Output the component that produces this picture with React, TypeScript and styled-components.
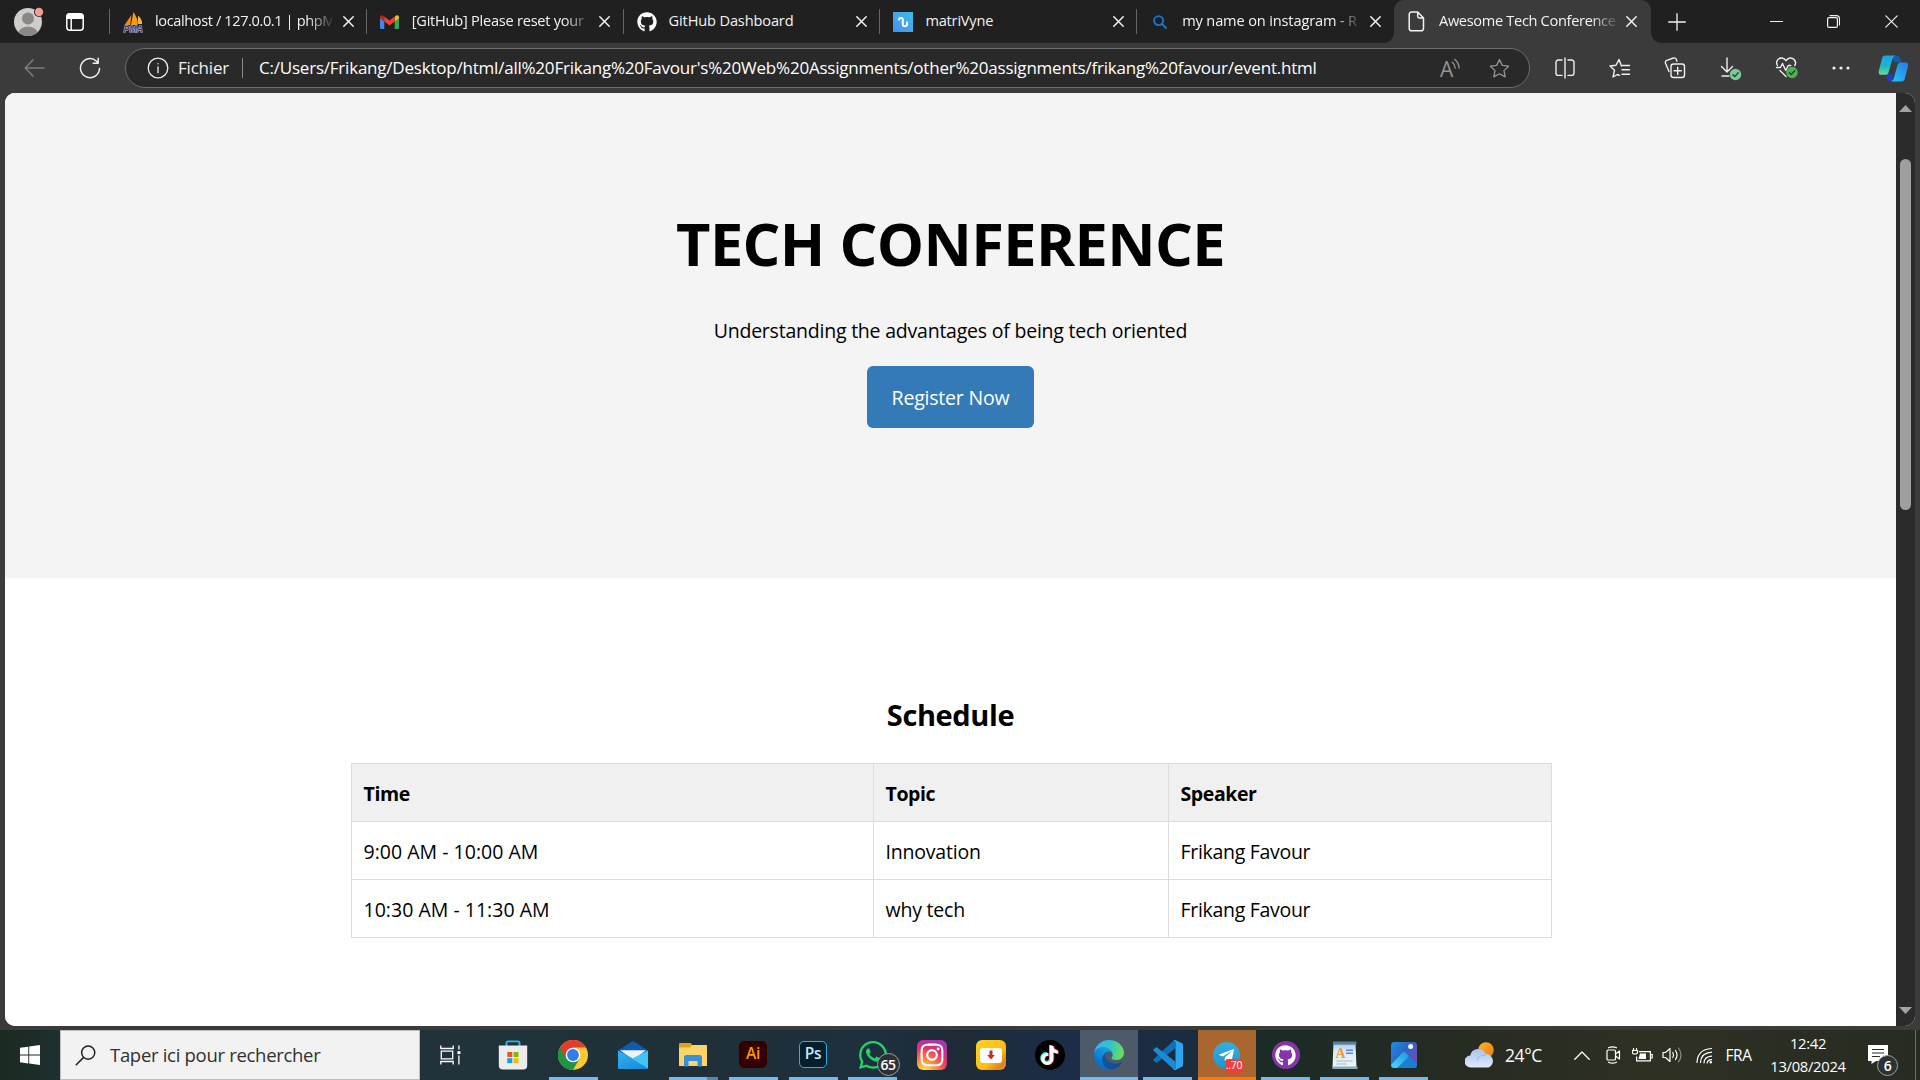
import React from "react";
import styled, { createGlobalStyle, css } from "styled-components";
import { FaGithub, FaTiktok, FaWhatsapp, FaInstagram, FaTelegramPlane } from "react-icons/fa";

const Global = createGlobalStyle`
  * { box-sizing: border-box; }
  html, body { margin: 0; padding: 0; background: #3b3b3b; }
  body { font-family: "Open Sans", "Noto Sans", "Liberation Sans", sans-serif; overflow: hidden; }
  svg { display: block; flex: none; }
`;

const Screen = styled.div`
  width: 1920px;
  height: 1080px;
  display: flex;
  flex-direction: column;
  background: #3b3b3b;
  overflow: hidden;
`;

/* ---------- tab strip ---------- */

const TabStrip = styled.header`
  height: 43px;
  flex: none;
  display: flex;
  background: #202020;
  color: #f2f2f2;
`;

const StripLead = styled.div`
  width: 110px;
  display: flex;
  align-items: center;
  padding-left: 13px;
  gap: 22px;
`;

const Tab = styled.div<{ $active?: boolean }>`
  width: 256.8px;
  height: 43px;
  display: flex;
  align-items: center;
  position: relative;
  padding-left: 13px;
  &::before {
    content: "";
    position: absolute;
    left: -1px;
    top: 9px;
    width: 1px;
    height: 25px;
    background: #666;
  }
  ${(p) =>
    p.$active &&
    css`
      background: #3b3b3b;
      border-radius: 10px 10px 0 0;
      &::before {
        left: -10px;
        top: 33px;
        width: 10px;
        height: 10px;
        background: radial-gradient(circle at 0 0, #202020 9.5px, #3b3b3b 10px);
      }
      &::after {
        content: "";
        position: absolute;
        right: -10px;
        top: 33px;
        width: 10px;
        height: 10px;
        background: radial-gradient(circle at 100% 0, #202020 9.5px, #3b3b3b 10px);
      }
    `}
`;

const TabIcon = styled.div`
  width: 20px;
  height: 22px;
  display: flex;
  align-items: center;
  justify-content: center;
`;

const TabTitle = styled.div<{ $ls: number; $fade?: boolean }>`
  width: 177px;
  margin-left: 12px;
  font-size: 14.6px;
  line-height: 20px;
  padding-bottom: 3px;
  letter-spacing: ${(p) => p.$ls}px;
  white-space: nowrap;
  ${(p) => p.$fade && css`mask-image: linear-gradient(90deg, #000 152px, transparent 181px);`}
`;

const TabClose = styled.div`
  width: 32px;
  display: flex;
  justify-content: center;
`;

const NewTab = styled.div`
  width: 53px;
  display: flex;
  align-items: center;
  justify-content: center;
`;

const WindowButtons = styled.div`
  margin-left: auto;
  display: flex;
`;

const WindowButton = styled.div`
  width: 57.5px;
  display: flex;
  align-items: center;
  justify-content: center;
`;

/* ---------- toolbar ---------- */

const Toolbar = styled.nav`
  height: 50px;
  flex: none;
  display: flex;
  align-items: center;
  color: #f0f0f0;
  background: #3b3b3b;
`;

const NavButtons = styled.div`
  width: 125px;
  display: flex;
  align-items: center;
  padding-left: 24px;
  gap: 34px;
`;

const AddressBar = styled.div`
  width: 1405px;
  height: 40px;
  border: 1px solid #6c6c6c;
  border-radius: 20px;
  background: #292929;
  display: flex;
  align-items: center;
  padding-left: 21px;
  font-size: 17px;
  line-height: 24px;
`;

const Scheme = styled.span`
  width: 50px;
  margin-left: 9px;
  letter-spacing: -0.2px;
  white-space: nowrap;
`;

const AddressDivider = styled.span`
  width: 1px;
  height: 20px;
  margin: 0 16px 0 14px;
  background: #8a8a8a;
`;

const Url = styled.span`
  flex: 1;
  letter-spacing: -0.215px;
  color: #fff;
  white-space: nowrap;
`;

const AddressActions = styled.div`
  display: flex;
  gap: 28px;
  padding-right: 19px;
  color: #959595;
`;

const ToolbarActions = styled.div`
  flex: 1;
  display: grid;
  grid-template-columns: 55px 55px 55px 57px 55px 54px 50px;
  padding-left: 7px;
  justify-items: center;
  align-items: center;
`;

/* ---------- page ---------- */

const Viewport = styled.div`
  height: 933px;
  flex: none;
  margin: 0 5px;
  display: flex;
  border-radius: 10px;
  overflow: hidden;
  background: #fff;
`;

const Page = styled.main`
  width: 1891px;
  display: flex;
  flex-direction: column;
  align-items: center;
  background: #fff;
  color: #000;
`;

const Hero = styled.section`
  width: 100%;
  height: 485px;
  padding-top: 110px;
  display: flex;
  flex-direction: column;
  align-items: center;
  background: #f4f4f4;
`;

const HeroTitle = styled.h1`
  margin: 0;
  font-size: 59.5px;
  line-height: 80px;
  font-weight: 700;
  letter-spacing: -0.65px;
  white-space: nowrap;
`;

const HeroText = styled.p`
  margin: 33px 0 20px;
  font-size: 19.5px;
  line-height: 30px;
  letter-spacing: -0.22px;
`;

const RegisterButton = styled.button`
  width: 167px;
  height: 62px;
  padding: 2px 0 0;
  border: 0;
  border-radius: 6px;
  background: #337ab7;
  color: #fff;
  font: 400 19.5px/30px "Open Sans", "Noto Sans", sans-serif;
  letter-spacing: -0.2px;
`;

const ScheduleTitle = styled.h2`
  margin: 117px 0 28px;
  font-size: 29px;
  line-height: 40px;
  font-weight: 700;
  letter-spacing: -0.4px;
`;

const ScheduleTable = styled.table`
  width: 1200px;
  margin-left: 1px;
  table-layout: fixed;
  border-collapse: collapse;
  font-size: 19.5px;
  line-height: 30px;
`;

const Row = styled.tr`
  height: 58px;
`;

const cell = css`
  border: 1px solid #dcdcdc;
  padding: 3px 12px 0;
  text-align: left;
  white-space: nowrap;
`;

const Head = styled.th<{ $w: number }>`
  ${cell}
  width: ${(p) => p.$w}px;
  background: #f0f0f0;
  font-weight: 700;
  letter-spacing: -0.4px;
`;

const Cell = styled.td<{ $ls: number }>`
  ${cell}
  letter-spacing: ${(p) => p.$ls}px;
`;

const Scrollbar = styled.div`
  width: 19px;
  background: #2b2b2b;
  display: flex;
  flex-direction: column;
  align-items: center;
  padding: 12px 0;
`;

const ScrollThumb = styled.div`
  width: 11px;
  height: 351px;
  margin: 47px 0 auto;
  border-radius: 6px;
  background: #9f9f9f;
`;

/* ---------- taskbar ---------- */

const Taskbar = styled.footer`
  height: 50px;
  margin-top: auto;
  flex: none;
  display: flex;
  color: #fff;
  background: linear-gradient(90deg, #1c2a20 0, #1d2f30 60px, #20323a 430px, #1f3039 700px, #1e2f3e 880px, #1e2a36 960px, #1c2d48 1060px, #1b2c3f 1190px, #1d2b25 1270px, #1f2b25 1340px, #262b22 1450px, #2e3022 1650px, #2a2e22 1800px, #262c22 1920px);
`;

const StartButton = styled.div`
  width: 60px;
  display: flex;
  align-items: center;
  justify-content: center;
`;

const SearchBox = styled.div`
  width: 360px;
  display: flex;
  align-items: center;
  padding-left: 14px;
  gap: 14px;
  background: #f2f2f2;
  border: 1px solid #bdbdbd;
  color: #303030;
  font-size: 18.5px;
  letter-spacing: -0.3px;
  white-space: nowrap;
`;

const SearchHint = styled.span`
  padding-bottom: 2px;
`;

type Underline = "none" | "full" | "multi" | "wide" | "alert";

const lines: Record<Underline, string> = {
  none: "none",
  full: "linear-gradient(#76b9ed, #76b9ed) center bottom / 49px 3px no-repeat",
  multi:
    "linear-gradient(90deg, #76b9ed 38px, #5785ab 38px) center bottom / 49px 3px no-repeat",
  wide: "linear-gradient(#76b9ed, #76b9ed) bottom / 100% 3px no-repeat, #4c5a69",
  alert: "linear-gradient(#ff7a00, #ff7a00) bottom / 100% 3px no-repeat, #a9672f",
};

const Slot = styled.div<{ $w: number; $line: Underline; $pull?: number }>`
  width: ${(p) => p.$w}px;
  margin: 0 ${(p) => (p.$line === "wide" || p.$line === "alert" ? 0.5 : 0)}px;
  display: flex;
  align-items: center;
  justify-content: center;
  padding-right: ${(p) => p.$pull ?? 0}px;
  background: ${(p) => lines[p.$line]};
`;

const IconWithBadge = styled.div`
  position: relative;
`;

const CountBadge = styled.span<{ $x: number; $y: number; $d: number }>`
  position: absolute;
  left: ${(p) => p.$x}px;
  top: ${(p) => p.$y}px;
  width: ${(p) => p.$d}px;
  height: ${(p) => p.$d}px;
  border-radius: 50%;
  border: 1px solid #a0a0a0;
  background: #2b3134;
  color: #fff;
  font-size: 14px;
  font-weight: 600;
  letter-spacing: -0.4px;
  display: flex;
  align-items: center;
  justify-content: center;
`;

const RedBadge = styled.span`
  position: absolute;
  left: 12px;
  top: 17px;
  width: 18px;
  height: 14px;
  border-radius: 4px;
  background: #f03e3e;
  color: #fff;
  font-size: 10.5px;
  line-height: 13px;
  letter-spacing: -0.3px;
  text-align: center;
`;

const RoundIcon = styled.div<{ $bg: string; $r?: string; $w?: number; $h?: number }>`
  width: ${(p) => p.$w ?? 30}px;
  height: ${(p) => p.$h ?? 30}px;
  border-radius: ${(p) => p.$r ?? "50%"};
  background: ${(p) => p.$bg};
  color: #fff;
  display: flex;
  align-items: center;
  justify-content: center;
`;

const AdobeIcon = styled.div<{ $bg: string; $fg: string; $edge: string }>`
  width: 28px;
  height: 27px;
  margin-bottom: 2px;
  border-radius: 5px;
  border: 1.5px solid ${(p) => p.$edge};
  background: ${(p) => p.$bg};
  color: ${(p) => p.$fg};
  font-size: 15.5px;
  line-height: 22px;
  font-weight: 600;
  letter-spacing: -0.4px;
  text-align: center;
`;

const TikTokMark = styled.span<{ $c: string; $x: number; $y: number }>`
  position: absolute;
  left: ${(p) => p.$x}px;
  top: ${(p) => p.$y}px;
  color: ${(p) => p.$c};
`;

const TikTokStack = styled.div`
  position: relative;
  width: 19px;
  height: 19px;
`;

const Weather = styled.div`
  width: 135px;
  padding-left: 32px;
  display: flex;
  align-items: center;
  gap: 10px;
  font-size: 17.5px;
  letter-spacing: -0.4px;
`;

const Tray = styled.div`
  width: 193px;
  flex: none;
  display: flex;
  align-items: center;
  padding-left: 2px;
`;

const TrayItem = styled.div<{ $w: number }>`
  width: ${(p) => p.$w}px;
  flex: none;
  display: flex;
  justify-content: center;
  font-size: 15.4px;
  letter-spacing: -0.4px;
`;

const Clock = styled.div`
  width: 94px;
  display: flex;
  flex-direction: column;
  align-items: center;
  padding-top: 2px;
  font-size: 14.8px;
  line-height: 23px;
  letter-spacing: -0.3px;
`;

const Notifications = styled.div`
  flex: 1;
  position: relative;
  display: flex;
  padding: 15px 0 0 13px;
`;

const DesktopEdge = styled.div`
  width: 5px;
  border-left: 1px solid #6e7168;
`;

/* ---------- icons ---------- */

const Stroke = ({ w, h = w, sw = 1.4, children }: { w: number; h?: number; sw?: number; children: React.ReactNode }) => (
  <svg width={w} height={h} viewBox={`0 0 ${w} ${h}`} fill="none" stroke="currentColor" strokeWidth={sw} strokeLinecap="round" strokeLinejoin="round">
    {children}
  </svg>
);

const Cross = ({ s = 11, sw = 1.5 }: { s?: number; sw?: number }) => (
  <Stroke w={s} sw={sw}>
    <path d={`M.8 .8 L${s - 0.8} ${s - 0.8} M${s - 0.8} .8 L.8 ${s - 0.8}`} />
  </Stroke>
);

const Profile = () => (
  <svg width="31" height="31" viewBox="0 0 31 31">
    <defs>
      <clipPath id="avatar"><circle cx="15" cy="16" r="14" /></clipPath>
    </defs>
    <circle cx="15" cy="16" r="14" fill="#cfcdca" />
    <g clipPath="url(#avatar)" fill="#8a8886">
      <circle cx="15" cy="12.5" r="6" />
      <ellipse cx="15" cy="27" rx="9.5" ry="6.5" />
    </g>
    <circle cx="26" cy="6" r="5" fill="#202020" />
    <circle cx="26" cy="6" r="4.2" fill="#f79a94" />
  </svg>
);

const Workspaces = () => (
  <svg width="18" height="18" viewBox="0 0 18 18" fill="none" stroke="#fff" strokeWidth="1.5">
    <rect x=".8" y=".8" width="16.4" height="16.4" rx="3" />
    <path d="M1 3.5a2.5 2.5 0 0 1 2.5-2.5h11a2.5 2.5 0 0 1 2.5 2.5V5.3H1z" fill="#fff" />
    <path d="M5.2 5v12" />
  </svg>
);

const PhpMyAdmin = () => (
  <svg width="21" height="22" viewBox="0 0 21 22">
    <path d="M8 14 10.4 1q5 7 4.2 13z" fill="#f89c0e" />
    <path d="M15 13 15 4.5q4.5 4 4 8.5z" fill="#f7b24a" />
    <path d="M1.5 14 8.5 4 7.3 14z" fill="#ed8b1c" />
    <text x="10.3" y="20.8" textAnchor="middle" fontFamily="Liberation Sans, sans-serif" fontSize="8.6" fontWeight="700" fontStyle="italic" fill="#3a3f86" stroke="#c9cbe6" strokeWidth=".9" paintOrder="stroke" textLength="19">PMA</text>
  </svg>
);

const Gmail = () => (
  <svg width="19" height="14" viewBox="0 0 19 14">
    <path d="M0 3v9.7q0 1.3 1.3 1.3H4.3V6z" fill="#4285f4" />
    <path d="M19 3v9.7q0 1.3-1.3 1.3h-3V6z" fill="#34a853" />
    <path d="M0 2v1.2L4.3 6.6V2L3 .6Q.3-.4 0 2z" fill="#c5221f" />
    <path d="M19 2v1.2l-4.3 3.4V2L16 .6Q18.7-.4 19 2z" fill="#fbbc04" />
    <path d="M4.3 1.6 9.5 5.6l5.2-4v5L9.5 10.5 4.3 6.6z" fill="#ea4335" />
  </svg>
);

const MatriVyne = () => (
  <svg width="20" height="20" viewBox="0 0 20 20">
    <defs>
      <linearGradient id="mv" x1="0" y1="1" x2="1" y2="0">
        <stop offset="0" stopColor="#4a8cf0" />
        <stop offset="1" stopColor="#3cc0e6" />
      </linearGradient>
    </defs>
    <rect width="20" height="20" fill="url(#mv)" />
    <path d="M6 7.500C6.200 5.400 9.800 5.400 9.800 8v4.500c0 2.300 4 2.300 4.200 0V10.500" fill="none" stroke="#fff" strokeWidth="2" strokeLinecap="round" />
  </svg>
);

const SearchBlue = () => (
  <svg width="14" height="14" viewBox="0 0 14 14" fill="none" stroke="#1576d1" strokeWidth="1.9" strokeLinecap="round">
    <circle cx="5.6" cy="5.6" r="4.5" />
    <path d="M9 9l4 4" />
  </svg>
);

const FileIcon = () => (
  <Stroke w={17} h={21} sw={1.5}>
    <path d="M3.5 1h6.2L15.5 7v10.5a2.3 2.3 0 0 1-2.3 2.3h-9.700A2.3 2.3 0 0 1 1.2 17.5V3.3A2.3 2.3 0 0 1 3.5 1zM9.7 1.3v4a1.6 1.6 0 0 0 1.6 1.6h4" />
  </Stroke>
);

const starPath = "M10.5 1.5l2.800 5.900 6.300.8-4.600 4.400 1.200 6.300-5.700-3.100-5.700 3.100L6 12.600 1.400 8.200l6.300-.8z";

const ReadAloud = () => (
  <svg width="21" height="20" viewBox="0 0 21 20" fill="none" stroke="currentColor" strokeWidth="1.4" strokeLinecap="round">
    <text x="0" y="18.500" fontSize="21" fontFamily="Open Sans, sans-serif" fontWeight="400" fill="currentColor" stroke="none">A</text>
    <path d="M12.300 4.200q2.600 2 2.900 5.800M14.800 1.500q4 3 4.300 8.500" />
  </svg>
);

const Ribbon = () => (
  <svg width="31" height="27" viewBox="0 0 32 28">
    <defs>
      <linearGradient id="cpA" x1="0" y1="0" x2="0" y2="1">
        <stop offset="0" stopColor="#1ba4ea" />
        <stop offset=".55" stopColor="#1bb5c9" />
        <stop offset="1" stopColor="#6fdc86" />
      </linearGradient>
      <linearGradient id="cpB" x1="0" y1="1" x2="1" y2="0">
        <stop offset="0" stopColor="#1fc8fb" />
        <stop offset="1" stopColor="#2b78e4" />
      </linearGradient>
    </defs>
    <path d="M14 .6h5.300q2.700 0 3.600 3l1.200 4.200h-7z" fill="#0f5fa6" />
    <path d="M8 20h7.500l-1.200 7.400Q10.500 27.600 9.300 24z" fill="#1a3fd0" />
    <path d="M7.400.6h10.200q-1.800.7-2.600 3.300l-4 13.600q-.9 3-4 3H3.600Q-.2 20.500.8 16.300L4 4Q4.800.6 7.400.6z" fill="url(#cpA)" />
    <path d="M24.400 27.400H13.600q2-.7 2.800-3.300l3.600-13.300q.9-3 4-3h4.200q3.800 0 2.800 4.200L27.800 24q-.8 3.400-3.400 3.400z" fill="url(#cpB)" />
  </svg>
);

const CheckDot = ({ x, y, c }: { x: number; y: number; c: string }) => (
  <g>
    <circle cx={x} cy={y} r="5.700" fill={c} stroke="none" />
    <path d={`M${x - 2.6} ${y + 0.2}l1.800 1.900 3.500-3.900`} stroke="#20402a" strokeWidth="1.3" fill="none" />
  </g>
);

const WindowsLogo = () => (
  <svg width="20" height="20" viewBox="0 0 20 20" fill="#fff">
    <path d="M0 2.800 8.300 1.700V9.600H0zM9.200 1.500 20 0v9.600H9.200zM0 10.500h8.300v7.900L0 17.300zM9.200 10.500H20V20L9.200 18.500z" />
  </svg>
);

const TaskView = () => (
  <svg width="21" height="20" viewBox="0 0 21 20" fill="none" stroke="#fff" strokeWidth="1.3">
    <path d="M.8 .5v3h12.400v-3M.8 19.500v-3h12.400v3M1.300 6.200h11.400v7.600H1.300zM18.900 .5v4M18.900 10.500v9" />
    <path d="M17.400 6.200h3v2.900h-3z" fill="#fff" stroke="none" />
  </svg>
);

const Store = () => (
  <svg width="30" height="30" viewBox="0 0 30 30">
    <path d="M8.500 7V3q0-1.600 1.600-1.600h9.800q1.600 0 1.600 1.600v4" fill="none" stroke="#28b5ee" strokeWidth="1.900" />
    <path d="M.8 5.500h28.400v20q0 4-4 4H4.800q-4 0-4-4z" fill="#ececec" />
    <path d="M9.300 12h5v5h-5z" fill="#f1511b" />
    <path d="M15.500 12h5v5h-5z" fill="#80bb03" />
    <path d="M9.300 18.200h5v5h-5z" fill="#00a4ef" />
    <path d="M15.500 18.200h5v5h-5z" fill="#fbb901" />
  </svg>
);

const Chrome = () => (
  <svg width="30" height="30" viewBox="0 0 30 30">
    <circle cx="15" cy="15" r="15" fill="#fcc934" />
    <path d="M15 15 2 7.500A15 15 0 0 0 15 30L21.500 18.800z" fill="#229342" />
    <path d="M2 7.500A15 15 0 0 1 28 7.500H15L8.600 18.500z" fill="#e33b2e" />
    <circle cx="15" cy="15" r="7.300" fill="#fff" />
    <circle cx="15" cy="15" r="5.900" fill="#2f7de9" />
  </svg>
);

const Mail = () => (
  <svg width="30" height="28" viewBox="0 0 30 28">
    <defs>
      <linearGradient id="mailBody" x1="0" y1="0" x2="1" y2="1">
        <stop offset="0" stopColor="#30b2f0" />
        <stop offset="1" stopColor="#1a86d8" />
      </linearGradient>
    </defs>
    <path d="M0 9.500 14 .4q1-.6 2 0L30 9.500V14H0z" fill="#0c5cb0" />
    <path d="M2 9.200h26L15.500 19z" fill="#eef1f5" />
    <path d="M0 9.500 15.500 18 30 27q0 1-1 1H1q-1 0-1-1z" fill="url(#mailBody)" />
    <path d="M30 9.500V27.500L13.800 17.800z" fill="#40c6f6" />
  </svg>
);

const Explorer = () => (
  <svg width="28" height="24" viewBox="0 0 28 24">
    <path d="M0 1.200Q0 0 1.200 0H11q1 0 1.500 1l1.200 2H28v6H0z" fill="#e0a318" />
    <path d="M0 4.500h11l2-2.500h14q1 0 1 1v20H0z" fill="#fbd567" />
    <path d="M5 23.500v-9q0-2.500 2.500-2.500h13q2.500 0 2.500 2.500v9h-4.500v-5.500H9.500v5.500z" fill="#3a8fd9" />
  </svg>
);

const Downloader = () => (
  <svg width="22" height="15" viewBox="0 0 22 15">
    <rect width="22" height="15" rx="3" fill="#fff" />
    <path d="M9.500 2.500h3v4.500h2.300L11 11.500 7.200 7h2.300z" fill="#d3262a" />
  </svg>
);

const EdgeLogo = () => (
  <svg width="30" height="30" viewBox="0 0 256 256">
    <defs>
      <linearGradient id="edDark" x1="63" y1="178" x2="242" y2="178" gradientUnits="userSpaceOnUse">
        <stop offset="0" stopColor="#0c59a4" />
        <stop offset="1" stopColor="#114a8b" />
      </linearGradient>
      <linearGradient id="edBlue" x1="157" y1="100" x2="46" y2="222" gradientUnits="userSpaceOnUse">
        <stop offset="0" stopColor="#1b9de2" />
        <stop offset=".3" stopColor="#1595df" />
        <stop offset="1" stopColor="#0a6cc8" />
      </linearGradient>
      <linearGradient id="edTop" x1="20" y1="60" x2="250" y2="110" gradientUnits="userSpaceOnUse">
        <stop offset="0" stopColor="#35b5f0" />
        <stop offset=".5" stopColor="#32c4c8" />
        <stop offset="1" stopColor="#6ae052" />
      </linearGradient>
    </defs>
    <path d="M231 190.500c-3.400 1.800-6.900 3.400-10.500 4.700a101.500 101.500 0 0 1-35.900 6.500c-47.300 0-88.500-32.500-88.500-74.300a31.500 31.500 0 0 1 16.400-27.300c-42.800 1.800-53.800 46.400-53.800 72.500 0 74 68.100 81.400 82.800 81.400 7.900 0 19.800-2.300 27-4.600l1.300-.4a128.300 128.300 0 0 0 66.600-52.800 4 4 0 0 0-5.400-5.700z" fill="url(#edDark)" />
    <path d="M105.700 241.400a79.200 79.200 0 0 1-22.700-21.300 80.700 80.700 0 0 1 29.500-120c3.200-1.500 8.500-4.100 15.600-4a32.400 32.400 0 0 1 25.700 13 31.900 31.900 0 0 1 6.300 18.700c0-.2 24.500-79.600-80-79.600-43.900 0-80 41.700-80 78.200a130.200 130.200 0 0 0 12.100 56 128 128 0 0 0 156.300 67.100 75.500 75.500 0 0 1-62.800-8z" fill="url(#edBlue)" />
    <path d="M152.300 148.900c-.9 1-3.400 2.500-3.400 5.600 0 2.600 1.700 5.200 4.800 7.300 14.300 10 41.400 8.600 41.500 8.600a59.600 59.600 0 0 0 30.300-8.300 61.400 61.400 0 0 0 30.400-52.900c.3-22.400-8-37.300-11.300-43.900C223.500 23.900 177.700 0 128 0A128 128 0 0 0 0 126.200c.5-36.500 36.800-66 80-66 3.500 0 23.500.3 42 10a72.600 72.600 0 0 1 30.900 29.300c6.100 10.600 7.200 24.100 7.200 29.500s-2.700 13.300-7.800 19.900z" fill="url(#edTop)" />
  </svg>
);

const VsCode = () => (
  <svg width="30" height="30" viewBox="0 0 30 30">
    <path d="M22.500 0v8.300L4.200 22.600q-.7.500-1.400 0L.6 20.700q-.8-.7 0-1.500L20.500.7z" fill="#0f6fb8" />
    <path d="M22.500 30v-8.300L4.200 7.400q-.7-.5-1.400 0L.6 9.300q-.8.700 0 1.500l19.900 18.500z" fill="#1b8ad4" />
    <path d="M22.300 0l6.700 3.200Q30 3.800 30 5v20q0 1.200-1 1.800L22.300 30q-1.200.2-1.800-.7l2-.8v-27l-2-.8q.6-.9 1.800-.7z" fill="#2ba5ef" />
  </svg>
);

const WordPad = () => (
  <svg width="26" height="28" viewBox="0 0 26 28">
    <defs>
      <linearGradient id="wpPage" x1="0" y1="0" x2="0" y2="1">
        <stop offset="0" stopColor="#9fc8e4" />
        <stop offset=".35" stopColor="#d8ebf6" />
        <stop offset="1" stopColor="#eef5f9" />
      </linearGradient>
    </defs>
    <path d="M1.500 1h22l1 26H.5z" fill="url(#wpPage)" />
    <path d="M1 .5h23.400v3.200H1z" fill="#5a7f9e" />
    <path d="M.5 25.500h25V28H.5z" fill="#8fa9ba" />
    <text x="3.500" y="17" fontFamily="Liberation Serif, serif" fontSize="14" fontWeight="700" fill="#ee9a44">A</text>
    <path d="M14 9.300h7M14 12.300h7" stroke="#5f86c8" strokeWidth="1.600" />
    <path d="M4.500 20h16M4.500 23h10" stroke="#a9b9c4" strokeWidth="1" />
  </svg>
);

const Photos = () => (
  <svg width="26" height="26" viewBox="0 0 26 26">
    <defs>
      <linearGradient id="phBg" x1="0" y1="0" x2="1" y2=".7">
        <stop offset="0" stopColor="#1690e8" />
        <stop offset=".5" stopColor="#2f66c8" />
        <stop offset="1" stopColor="#6a4fae" />
      </linearGradient>
      <linearGradient id="phHill" x1="0" y1="1" x2=".8" y2="0">
        <stop offset="0" stopColor="#4fdcf8" />
        <stop offset="1" stopColor="#1f9fe4" />
      </linearGradient>
      <clipPath id="phClip"><rect width="26" height="26" rx="3.500" /></clipPath>
    </defs>
    <g clipPath="url(#phClip)">
      <rect width="26" height="26" fill="url(#phBg)" />
      <path d="M11 11q2-2 4 0l13 13v4H8z" fill="#1c7fd2" />
      <path d="M-1 24 11 11q2-2 4 0l3 3.200L5 27H-1z" fill="url(#phHill)" />
    </g>
    <circle cx="19.600" cy="4.600" r="2.500" fill="#f1f1fa" />
  </svg>
);

const WeatherIcon = () => (
  <svg width="30" height="26" viewBox="0 0 30 26">
    <defs>
      <linearGradient id="sun" x1="0" y1="0" x2="1" y2="1">
        <stop offset="0" stopColor="#fbb62c" />
        <stop offset="1" stopColor="#ee7a12" />
      </linearGradient>
      <linearGradient id="cloud" x1="0" y1="0" x2="0" y2="1">
        <stop offset="0" stopColor="#a9c3f2" />
        <stop offset="1" stopColor="#dfe8fa" />
      </linearGradient>
    </defs>
    <circle cx="21" cy="8" r="7.800" fill="url(#sun)" />
    <path d="M6 25.500a6 6 0 0 1-.8-12A8 8 0 0 1 20.500 12a7 7 0 0 1 3 13.500z" fill="url(#cloud)" />
    <path d="M12 18.500a7 7 0 0 1 9-5" fill="none" stroke="#9ab4e8" strokeWidth="1" />
  </svg>
);

const tabs = [
  { title: "localhost / 127.0.0.1 | phpM", icon: <PhpMyAdmin />, ls: -0.4, fade: true },
  { title: "[GitHub] Please reset your", icon: <Gmail />, ls: -0.25, fade: true },
  { title: "GitHub Dashboard", icon: <FaGithub size={20} color="#fff" />, ls: -0.15 },
  { title: "matriVyne", icon: <MatriVyne />, ls: -0.2 },
  { title: "my name on instagram - R", icon: <SearchBlue />, ls: -0.15, fade: true },
  { title: "Awesome Tech Conference", icon: <FileIcon />, ls: -0.33, fade: true, active: true },
];

const sessions = [
  ["9:00 AM - 10:00 AM", "Innovation", "Frikang Favour"],
  ["10:30 AM - 11:30 AM", "why tech", "Frikang Favour"],
];

const apps: { w: number; line: Underline; pull?: number; icon: React.ReactNode }[] = [
  { w: 62, line: "none", pull: 1, icon: <TaskView /> },
  { w: 61, line: "none", icon: <Store /> },
  { w: 60, line: "full", icon: <Chrome /> },
  { w: 60, line: "none", icon: <Mail /> },
  { w: 60, line: "multi", icon: <Explorer /> },
  { w: 60, line: "full", icon: <AdobeIcon $bg="#330000" $fg="#ff9a00" $edge="#330000">Ai</AdobeIcon> },
  { w: 60, line: "full", icon: <AdobeIcon $bg="#071e2b" $fg="#c5eafa" $edge="#27b3ea">Ps</AdobeIcon> },
  {
    w: 59,
    line: "full",
    icon: (
      <IconWithBadge>
        <FaWhatsapp size={32} color="#25d366" />
        <CountBadge $x={20} $y={14} $d={23}>65</CountBadge>
      </IconWithBadge>
    ),
  },
  {
    w: 59,
    line: "none",
    icon: (
      <RoundIcon $r="6px" $bg="radial-gradient(circle at 25% 105%, #fdd35b 8%, #f9893c 32%, #e3346b 60%, #b432a6 80%, #6a48d6 110%)">
        <FaInstagram size={26} />
      </RoundIcon>
    ),
  },
  { w: 59, line: "none", icon: <RoundIcon $r="6px" $bg="linear-gradient(135deg, #ffd321 0, #fdbd14 60%, #d98322 85%, #f0a31c 100%)"><Downloader /></RoundIcon> },
  {
    w: 59,
    line: "none",
    icon: (
      <RoundIcon $bg="#000">
        <TikTokStack>
          <TikTokMark $c="#25f4ee" $x={-0.7} $y={-0.5}><FaTiktok size={19} /></TikTokMark>
          <TikTokMark $c="#fe2c55" $x={0.9} $y={0.7}><FaTiktok size={19} /></TikTokMark>
          <TikTokMark $c="#fff" $x={0} $y={0}><FaTiktok size={19} /></TikTokMark>
        </TikTokStack>
      </RoundIcon>
    ),
  },
  { w: 58, line: "wide", icon: <EdgeLogo /> },
  { w: 59, line: "full", icon: <VsCode /> },
  {
    w: 58,
    line: "alert",
    icon: (
      <IconWithBadge>
        <RoundIcon $bg="linear-gradient(#37aee2, #1e96c8)" $w={27} $h={27}>
          <FaTelegramPlane size={17} />
        </RoundIcon>
        <RedBadge>..70</RedBadge>
      </IconWithBadge>
    ),
  },
  { w: 59, line: "full", icon: <RoundIcon $bg="#8534ad" $w={28} $h={28}><FaGithub size={21} /></RoundIcon> },
  { w: 59, line: "full", icon: <WordPad /> },
  { w: 59, line: "full", icon: <Photos /> },
];

export default function App() {
  return (
    <>
      <Global />
      <Screen>
        <TabStrip>
          <StripLead>
            <Profile />
            <Workspaces />
          </StripLead>
          {tabs.map((t) => (
            <Tab key={t.title} $active={t.active}>
              <TabIcon>{t.icon}</TabIcon>
              <TabTitle $ls={t.ls} $fade={t.fade}>{t.title}</TabTitle>
              <TabClose><Cross /></TabClose>
            </Tab>
          ))}
          <NewTab>
            <Stroke w={18} sw={1.3}><path d="M9 .7v16.600M.7 9h16.600" /></Stroke>
          </NewTab>
          <WindowButtons>
            <WindowButton><Stroke w={13} h={3} sw={1.2}><path d="M.5 1.500h12" /></Stroke></WindowButton>
            <WindowButton>
              <Stroke w={13} sw={1.2}>
                <rect x=".6" y="2.600" width="9.800" height="9.800" rx="1.500" />
                <path d="M3 .6h6.500a3 3 0 0 1 3 3V10" />
              </Stroke>
            </WindowButton>
            <WindowButton><Cross s={13} sw={1.2} /></WindowButton>
          </WindowButtons>
        </TabStrip>

        <Toolbar>
          <NavButtons>
            <svg width="21" height="18" viewBox="0 0 21 18" fill="none" stroke="#7d7d7d" strokeWidth="1.500" strokeLinecap="round" strokeLinejoin="round">
              <path d="M20 9H1.200M9 1 1.200 9 9 17" />
            </svg>
            <Stroke w={22} sw={1.5}>
              <path d="M20.500 11.500A9.500 9.500 0 1 1 17.500 4.200l1.500 1.500M19.200 1.200v5h-5" />
            </Stroke>
          </NavButtons>
          <AddressBar>
            <Stroke w={22} sw={1.3}>
              <circle cx="11" cy="11" r="9.800" />
              <path d="M11 9.800v6" />
              <circle cx="11" cy="6.700" r=".7" fill="currentColor" stroke="none" />
            </Stroke>
            <Scheme>Fichier</Scheme>
            <AddressDivider />
            <Url>C:/Users/Frikang/Desktop/html/all%20Frikang%20Favour's%20Web%20Assignments/other%20assignments/frikang%20favour/event.html</Url>
            <AddressActions>
              <ReadAloud />
              <Stroke w={21} sw={1.3}><path d={starPath} /></Stroke>
            </AddressActions>
          </AddressBar>
          <ToolbarActions>
            <Stroke w={20} h={22} sw={1.4}>
              <path d="M7 3H3.200A2.200 2.200 0 0 0 1 5.200v11A2.200 2.200 0 0 0 3.200 18.400H7M13 3h3.800A2.200 2.200 0 0 1 19 5.200v11a2.200 2.200 0 0 1-2.200 2.200H13M10 1v20" />
            </Stroke>
            <Stroke w={22} h={21} sw={1.4}>
              <path d="M12.500 8 10 1.500 7 7.300 1 8l4.500 4.300-1.500 6.700 4.500-2.500 2 .8M13.500 7.500h7M13 11.800h7.500M13 16.200h7.500" />
            </Stroke>
            <Stroke w={22} h={22} sw={1.4}>
              <path d="M5 14.500 1.500 6.300q-.7-2 1.300-2.900L9.500 1q2-.6 2.800 1.300l.7 1.900" />
              <rect x="7" y="7" width="13.500" height="13.500" rx="2.500" />
              <path d="M13.700 10.200v7.200M10.100 13.800h7.200" />
            </Stroke>
            <Stroke w={22} h={26} sw={1.4}>
              <path d="M7 3v14M1.500 11.500 7 17l5.500-5.500M2 21h7" />
              <CheckDot x={15.5} y={19.5} c="#7cc99a" />
            </Stroke>
            <Stroke w={24} h={24} sw={1.4}>
              <path d="M2.500 9.500C0 5.500 3.500 1.500 7 2q2.500.4 4 2.700Q12.500 2.400 15 2c4-.5 7 4 4.700 7.500M1.500 11.500h4l2-4 3.200 7 2.500-5h2.500M5 14.500l6 6" />
              <CheckDot x={17} y={16.500} c="#4fb054" />
            </Stroke>
            <svg width="18" height="4" viewBox="0 0 18 4" fill="#f0f0f0">
              <circle cx="2" cy="2" r="1.600" /><circle cx="9" cy="2" r="1.600" /><circle cx="16" cy="2" r="1.600" />
            </svg>
            <Ribbon />
          </ToolbarActions>
        </Toolbar>

        <Viewport>
          <Page>
            <Hero>
              <HeroTitle>TECH CONFERENCE</HeroTitle>
              <HeroText>Understanding the advantages of being tech oriented</HeroText>
              <RegisterButton>Register Now</RegisterButton>
            </Hero>
            <ScheduleTitle>Schedule</ScheduleTitle>
            <ScheduleTable>
              <thead>
                <Row>
                  <Head $w={522}>Time</Head>
                  <Head $w={295}>Topic</Head>
                  <Head $w={383}>Speaker</Head>
                </Row>
              </thead>
              <tbody>
                {sessions.map((s) => (
                  <Row key={s[0]}>
                    <Cell $ls={0.02}>{s[0]}</Cell>
                    <Cell $ls={-0.2}>{s[1]}</Cell>
                    <Cell $ls={-0.3}>{s[2]}</Cell>
                  </Row>
                ))}
              </tbody>
            </ScheduleTable>
          </Page>
          <Scrollbar>
            <svg width="13" height="7" viewBox="0 0 13 7" fill="#a3a3a3"><path d="M6.500 0 13 7H0z" /></svg>
            <ScrollThumb />
            <svg width="13" height="7" viewBox="0 0 13 7" fill="#a3a3a3"><path d="M0 0h13L6.500 7z" /></svg>
          </Scrollbar>
        </Viewport>

        <Taskbar>
          <StartButton><WindowsLogo /></StartButton>
          <SearchBox>
            <svg width="21" height="21" viewBox="0 0 21 21" fill="none" stroke="#222" strokeWidth="1.500">
              <circle cx="13.200" cy="7.600" r="6.600" />
              <path d="M8.600 12.400.8 20.200" />
            </svg>
            <SearchHint>Taper ici pour rechercher</SearchHint>
          </SearchBox>
          {apps.map((a, i) => (
            <Slot key={i} $w={a.w} $line={a.line} $pull={a.pull}>{a.icon}</Slot>
          ))}
          <Weather><WeatherIcon />24°C</Weather>
          <Tray>
            <TrayItem $w={24}><Stroke w={16} h={9} sw={1.3}><path d="M.8 8.200 8 1l7.200 7.200" /></Stroke></TrayItem>
            <TrayItem $w={38}>
              <Stroke w={15} h={18} sw={1.2}>
                <rect x="1" y="4" width="8.500" height="10" rx="1" />
                <path d="M9.500 8 13.500 5v8l-4-3M2.500 1.800Q6.500-.2 10.500 1.800M2.500 16.200q4 2 8 0" />
              </Stroke>
            </TrayItem>
            <TrayItem $w={21}>
              <svg width="21" height="15" viewBox="0 0 21 15" fill="none" stroke="#fff" strokeWidth="1.200">
                <path d="M7 3.600h11.400v9.200H4.600V8.500M18.800 6.500h1.400v3.500h-1.400" />
                <path d="M8 5.500h6v5.500H6.500z" fill="#fff" stroke="none" />
                <path d="M1.500 0v2.500M4.500 0v2.500M.5 2.500h5v2q0 1.500-2.500 1.500T.5 4.500z" />
              </svg>
            </TrayItem>
            <TrayItem $w={38}>
              <Stroke w={21} h={18} sw={1.2}>
                <path d="M1 6.500h2.500L8 2.500v13l-4.500-4H1zM10.800 6.500q1.500 2.500 0 5M13.500 4.500q3 4.500 0 9" />
                <path d="M16.500 2q5 7 0 14" opacity=".45" />
              </Stroke>
            </TrayItem>
            <TrayItem $w={26}>
              <Stroke w={17} sw={1.2}>
                <path d="M1 15.500Q1.500 2.500 15.500 1.500M4.500 15.500Q5 6 15.500 5.200M8 15.800q.5-6 7.500-6.600M11.200 16q.4-3 4.300-3.300" />
                <circle cx="14.800" cy="15.300" r="1.200" fill="#fff" stroke="none" />
              </Stroke>
            </TrayItem>
            <TrayItem $w={43}>FRA</TrayItem>
          </Tray>
          <Clock>
            <span>12:42</span>
            <span>13/08/2024</span>
          </Clock>
          <Notifications>
            <svg width="20" height="19" viewBox="0 0 20 19">
              <path d="M0 0h20v16H8L3.500 19v-3H0z" fill="#fff" />
              <path d="M4 4.500h12M4 8h12M4 11.500h8" stroke="#2a2e22" strokeWidth="1.200" />
            </svg>
            <CountBadge $x={22} $y={25} $d={21}>6</CountBadge>
          </Notifications>
          <DesktopEdge />
        </Taskbar>
      </Screen>
    </>
  );
}
